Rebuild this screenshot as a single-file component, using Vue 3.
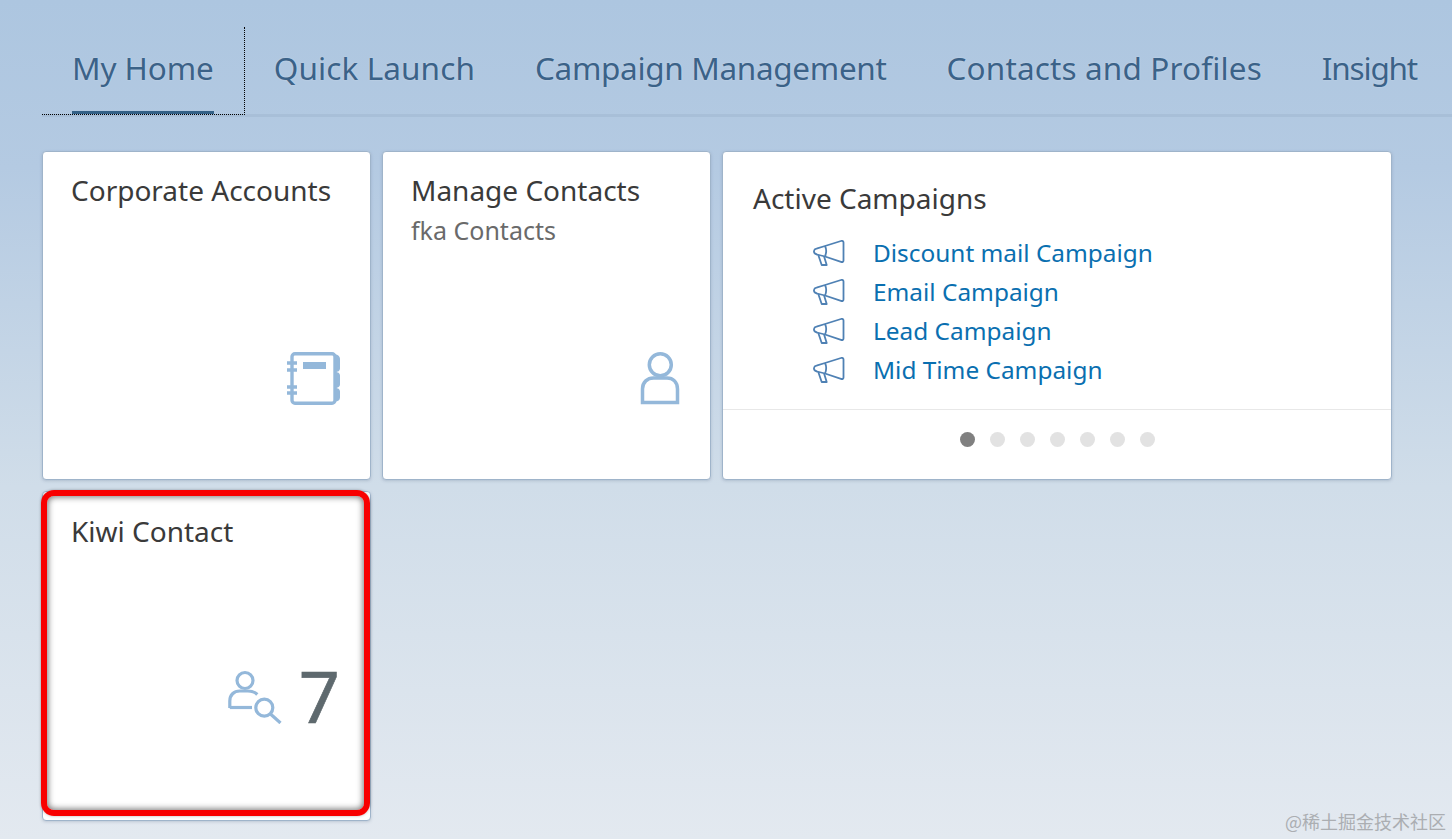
<script setup>
const tabs = ['My Home', 'Quick Launch', 'Campaign Management', 'Contacts and Profiles', 'Insight']
const campaigns = ['Discount mail Campaign', 'Email Campaign', 'Lead Campaign', 'Mid Time Campaign']
const dots = [0, 1, 2, 3, 4, 5, 6]
</script>

<template>
  <div class="page">
    <nav class="tabbar">
      <div v-for="(t, i) in tabs" :key="t" class="tab" :class="{ active: i === 0 }">
        <span class="tab-label">{{ t }}</span>
      </div>
    </nav>
    <main class="grid">
      <section class="card">
        <h3 class="title">Corporate Accounts</h3>
        <div class="foot">
          <svg class="icon" width="54" height="56" viewBox="0 0 54 56" fill="none" stroke="#94b8da" stroke-width="3.4">
            <rect x="6" y="3.700" width="43" height="49.500" rx="3" />
            <path d="M1 13h10M1 20h10M1 37h10M1 43h10" />
            <path d="M49 4.500c3 0 5 2 5 4.500v9.500c0 2.500-2 3.500-5 3.500zM49 22c3 0 5 1 5 3.500v9c0 2-2 3.500-5 3.500zM49 38c3 0 5 1 5 3.500v6c0 2.500-2 4-5 4z" fill="#94b8da" stroke="none" />
            <rect x="17" y="12" width="23" height="7" fill="#94b8da" stroke="none" />
          </svg>
        </div>
      </section>
      <section class="card">
        <h3 class="title">Manage Contacts</h3>
        <p class="sub">fka Contacts</p>
        <div class="foot">
          <svg class="icon" width="42" height="56" viewBox="0 0 42 56" fill="none" stroke="#94b8da" stroke-width="3.500">
            <circle cx="22.300" cy="14.700" r="11" />
            <path d="M4.500 52.500V39c0-7 5-11 11-11h13.500c6 0 10.500 4 10.500 11v13.500z" />
          </svg>
        </div>
      </section>
      <section class="card wide">
        <div class="wide-body">
          <h3 class="title wide-title">Active Campaigns</h3>
          <ul class="list">
            <li v-for="c in campaigns" :key="c" class="row">
              <svg class="horn" width="32" height="26" viewBox="0 0 32 26" fill="none" stroke="#4f81b4" stroke-width="1.800" stroke-linejoin="round">
                <path d="M12 6 L28 1 C29.500 .6 30.500 1.200 30.500 2.500 V20.500 C30.500 21.800 29.500 22.300 28 21.800 L12 16.500 L4 14.500 C1.500 14 .8 12.500 1 11 C1.200 9.500 2 8.900 3.500 8.600 Z" />
                <path d="M5.300 15 L8.700 25 H13.700 L11 16.200" />
                <path d="M12 6 C13.500 9 13.500 13 12 16.500" />
              </svg>
              <a class="link">{{ c }}</a>
            </li>
          </ul>
        </div>
        <div class="pager">
          <span v-for="d in dots" :key="d" class="dot" :class="{ on: d === 0 }"></span>
        </div>
      </section>
      <section class="card kiwi">
        <h3 class="title">Kiwi Contact</h3>
        <div class="foot kiwi-foot">
          <svg width="54" height="54" viewBox="0 0 54 54" fill="none" stroke="#94b8da" stroke-width="3.200">
            <circle cx="17" cy="10.500" r="8" />
            <path d="M1.800 38V31c0-6 4-10 10-10h8c4 0 7 1 9.500 3.500" />
            <path d="M1.800 37.500H24" />
            <circle cx="36.300" cy="37.700" r="8.500" />
            <path d="M42.500 44l10 9" />
          </svg>
          <span class="num">7</span>
        </div>
      </section>
    </main>
    <div class="mark">@稀土掘金技术社区</div>
  </div>
</template>

<style>
html, body { margin: 0; height: 100%; overflow: hidden; }
</style>

<style scoped>
.page {
  position: relative;
  box-sizing: border-box;
  height: 839px;
  padding: 27px 0 0 42px;
  background: linear-gradient(180deg, #adc6e0 0%, #b4cae2 20%, #d0dde9 58%, #e3e9f0 100%);
  font-family: "Noto Sans", "Open Sans", sans-serif;
  overflow: hidden;
}
.tabbar {
  display: flex;
  height: 87px;
  border-bottom: 3px solid #a8bfd8;
}
.tab {
  box-sizing: border-box;
  height: 88px;
  padding: 0 30px;
  display: flex;
  flex-direction: column;
  color: #3b6288;
}
.tab.active {
  padding: 0 30px;
  border-right: 1px dotted #000;
  border-bottom: 1px dotted #000;
}
.tab:nth-child(2) { padding-left: 29px; }
.tab-label {
  height: 87px;
  box-sizing: border-box;
  line-height: 82px;
  white-space: nowrap;
  font-size: 31.500px;
  text-shadow: 0 0 2px rgba(255, 255, 255, .35);
}
.tab:nth-child(1) .tab-label { letter-spacing: -.1px; }
.tab:nth-child(2) .tab-label { letter-spacing: .1px; }
.tab:nth-child(3) .tab-label { letter-spacing: -.33px; }
.tab:nth-child(4) .tab-label { letter-spacing: .14px; }
.tab:nth-child(5) .tab-label { letter-spacing: -1.200px; }
.active .tab-label { border-bottom: 3px solid #346187; }
.grid {
  display: grid;
  grid-template-columns: 329px 329px 670px;
  grid-template-rows: 329px 330px;
  gap: 11px;
  margin-top: 34px;
}
.card {
  position: relative;
  box-sizing: border-box;
  display: flex;
  flex-direction: column;
  background: #fff;
  border: 1px solid #9fb4ca;
  border-radius: 4px;
  padding: 20px 28px 0;
  box-shadow: 0 1px 3px rgba(80, 100, 130, .25);
}
.title {
  margin: 0;
  font-size: 28px;
  font-weight: 400;
  line-height: 36px;
  color: #3a3a3a;
  white-space: nowrap;
}
.sub {
  margin: 5px 0 0;
  font-size: 25px;
  line-height: 34px;
  color: #6a6a6a;
}
.foot {
  position: absolute;
  right: 30px;
  top: 198px;
  display: flex;
  align-items: flex-start;
}
.wide { padding: 0; }
.wide-body { flex: 1; padding: 28px 30px 0; }
.list { list-style: none; margin: 17px 0 0; padding: 0 0 0 60px; }
.row { display: flex; align-items: center; height: 39px; gap: 28px; }
.link { color: #0a6fb0; font-size: 24.400px; white-space: nowrap; }
.pager {
  height: 70px;
  box-sizing: border-box;
  border-top: 1px solid #e8e8e8;
  display: flex;
  justify-content: center;
  align-items: center;
  gap: 15px;
  padding: 0 0 10px 1px;
}
.dot { width: 15px; height: 15px; border-radius: 50%; background: #e2e2e2; }
.dot.on { background: #808080; }
.kiwi { padding-top: 21px; }
.kiwi-foot { top: 178px; gap: 17px; }
.num {
  font-size: 72px;
  line-height: 72px;
  margin-top: -11px;
  color: #5e696e;
  -webkit-text-stroke: .6px #5e696e;
}
.kiwi::after {
  content: "";
  position: absolute;
  left: -2px;
  top: -2px;
  width: 329px;
  height: 326px;
  box-sizing: border-box;
  border: 6px solid #f80000;
  border-radius: 13px;
  box-shadow: inset 0 0 6px 1px rgba(0, 0, 0, .55), 0 0 3px rgba(0, 0, 0, .3);
}
.mark {
  position: absolute;
  right: 6px;
  bottom: 5px;
  font-family: "Noto Sans CJK SC", sans-serif;
  font-size: 18px;
  color: #abaeb2;
}
</style>
